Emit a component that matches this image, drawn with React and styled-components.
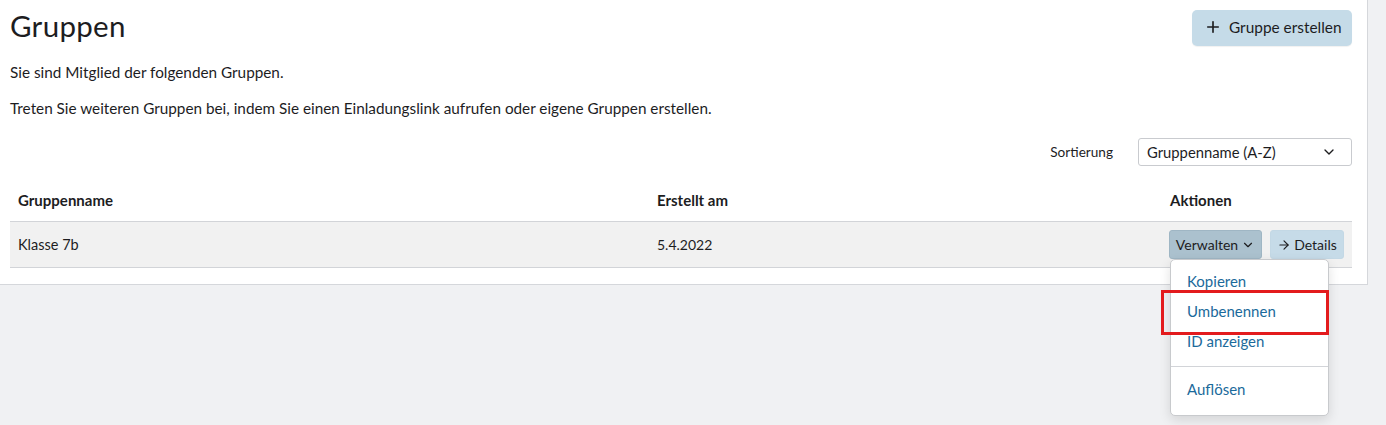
import React from "react";
import styled, { createGlobalStyle } from "styled-components";
import { Plus, ChevronDown, ArrowRight } from "lucide-react";

const Global = createGlobalStyle`
  html, body { margin: 0; padding: 0; }
  body {
    background: #f0f1f3;
    font-family: Lato, "Noto Sans", sans-serif;
    color: #1d1d1f;
    height: 425px;
    overflow: hidden;
  }
  * { box-sizing: border-box; }
`;

const Panel = styled.section`
  width: 1368px;
  background: #fff;
  border-right: 1px solid #d5d7db;
  border-bottom: 1px solid #d5d7db;
  padding: 10px 15px 16px 10px;
`;

const Header = styled.div`
  display: flex;
  align-items: center;
  justify-content: space-between;
  height: 36px;
`;

const Title = styled.h1`
  margin: 0 0 4px;
  font-size: 29.5px;
  font-weight: 400;
  line-height: 32px;
  letter-spacing: 0.3px;
`;

const PrimaryButton = styled.button`
  display: flex;
  align-items: center;
  gap: 7px;
  width: 160px;
  height: 36px;
  padding: 0 0 2px 12px;
  border: none;
  border-radius: 5px;
  background: #c5dbe8;
  color: #1d1d1f;
  font-family: inherit;
  font-size: 15.4px;
  box-shadow: 0 1px 1px rgba(0,0,0,0.06);
`;

const Text = styled.p`
  margin: ${(p) => p.$mt}px 0 0;
  font-size: 15.3px;
  line-height: 22px;
`;

const SortRow = styled.div`
  display: flex;
  justify-content: flex-end;
  align-items: center;
  gap: 25px;
  margin-top: 19px;
`;

const SortLabel = styled.label`
  font-size: 13.6px;
`;

const Select = styled.div`
  width: 214px;
  height: 28px;
  border: 1px solid #c9cbcf;
  border-radius: 3px;
  display: flex;
  align-items: center;
  justify-content: space-between;
  padding: 0 14px 0 8px;
  font-size: 14.8px;
`;

const Table = styled.div`
  margin-top: 14px;
  display: grid;
  grid-template-columns: 639px 513px 1fr;
`;

const HeadCell = styled.div`
  height: 42px;
  padding: 0 8px 2px;
  display: flex;
  align-items: center;
  font-size: 15px;
  font-weight: 700;
  border-bottom: 1px solid #d2d4d8;
`;

const Cell = styled.div`
  height: 46px;
  padding: 0 8px 0 ${(p) => (p.$actions ? 7 : 8)}px;
  display: flex;
  align-items: center;
  gap: 8px;
  font-size: ${(p) => p.$size || 14.5}px;
  background: #f1f1f1;
  border-bottom: 1px solid #d2d4d8;
`;

const MenuWrap = styled.div`
  position: relative;
`;

const SmallButton = styled.button`
  display: flex;
  align-items: center;
  justify-content: center;
  gap: 3px;
  width: ${(p) => p.$w}px;
  height: 29px;
  padding: 0;
  border: 1px solid ${(p) => (p.$dark ? "#9fb6c4" : "#c3d8e5")};
  border-radius: 3px;
  background: ${(p) => (p.$dark ? "#abc1ce" : "#c6dbe8")};
  color: #1d1d1f;
  font-family: inherit;
  font-size: 14px;
`;

const Menu = styled.div`
  position: absolute;
  top: 29px;
  left: 1px;
  width: 159px;
  padding: 6px 0 11px;
  background: #fff;
  border: 1px solid #c8cacd;
  border-radius: 5px;
  box-shadow: 0 4px 12px rgba(0,0,0,0.12);
  z-index: 2;
`;

const MenuItem = styled.div`
  height: 30px;
  padding: 0 16px;
  display: flex;
  align-items: center;
  font-size: 15px;
  color: #1b6a9b;
`;

const Separator = styled.div`
  height: 1px;
  background: #d2d4d8;
  margin: 10px 0 7px;
`;

const Highlight = styled.div`
  position: absolute;
  left: -10px;
  top: 30px;
  width: 168px;
  height: 45px;
  border: 3px solid #e31b1d;
  pointer-events: none;
`;

export default function App() {
  return (
    <>
      <Global />
      <Panel>
        <Header>
          <Title>Gruppen</Title>
          <PrimaryButton>
            <Plus size={18} strokeWidth={2.2} />
            Gruppe erstellen
          </PrimaryButton>
        </Header>
        <Text $mt={15}>Sie sind Mitglied der folgenden Gruppen.</Text>
        <Text $mt={14}>
          Treten Sie weiteren Gruppen bei, indem Sie einen Einladungslink aufrufen oder eigene Gruppen erstellen.
        </Text>
        <SortRow>
          <SortLabel>Sortierung</SortLabel>
          <Select>
            Gruppenname (A-Z)
            <ChevronDown size={16} strokeWidth={2} />
          </Select>
        </SortRow>
        <Table>
          <HeadCell>Gruppenname</HeadCell>
          <HeadCell>Erstellt am</HeadCell>
          <HeadCell>Aktionen</HeadCell>
          <Cell>Klasse 7b</Cell>
          <Cell $size={14}>5.4.2022</Cell>
          <Cell $actions>
            <MenuWrap>
              <SmallButton $dark $w={93}>
                Verwalten <ChevronDown size={14} strokeWidth={2} />
              </SmallButton>
              <Menu>
                <MenuItem>Kopieren</MenuItem>
                <MenuItem>Umbenennen</MenuItem>
                <MenuItem>ID anzeigen</MenuItem>
                <Separator />
                <MenuItem>Auflösen</MenuItem>
                <Highlight />
              </Menu>
            </MenuWrap>
            <SmallButton $w={74}>
              <ArrowRight size={14} strokeWidth={2} />
              Details
            </SmallButton>
          </Cell>
        </Table>
      </Panel>
    </>
  );
}
